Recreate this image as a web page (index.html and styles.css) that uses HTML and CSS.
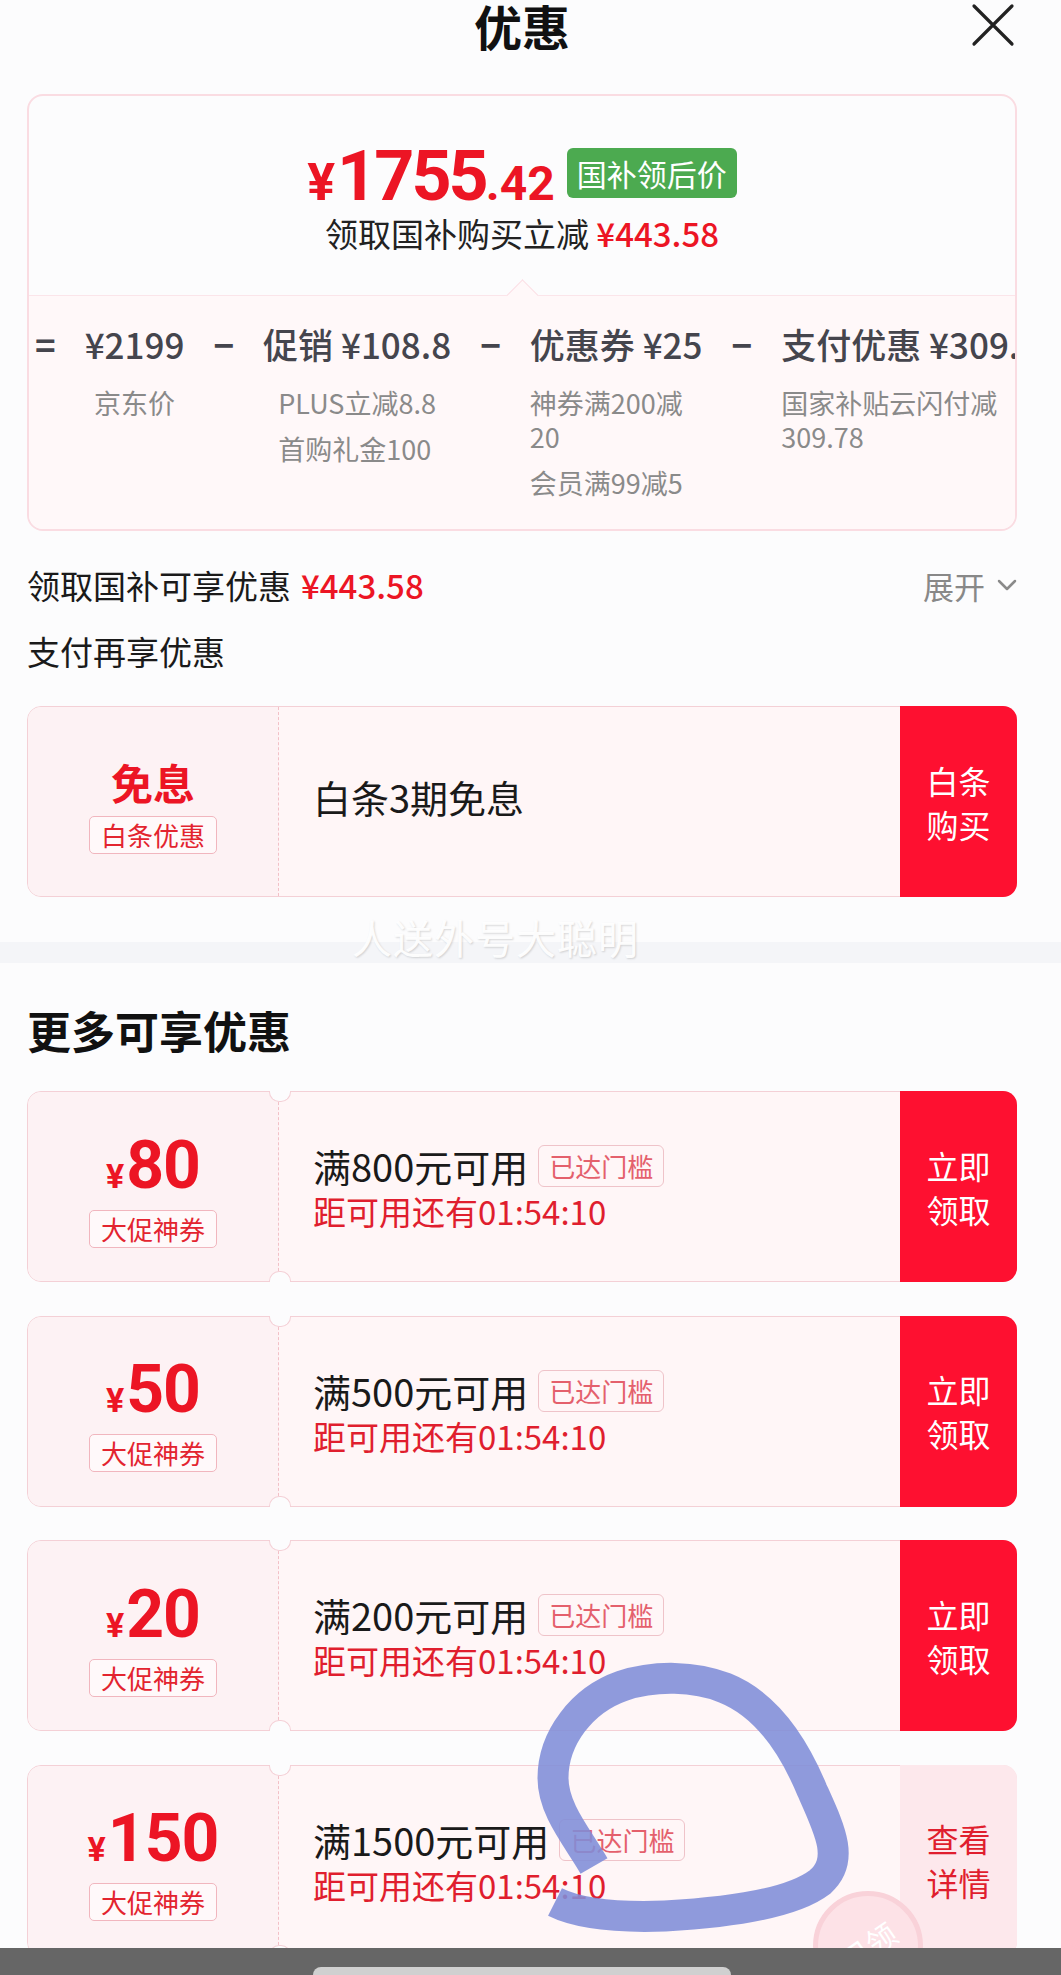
FILE: index.html
```html
<!DOCTYPE html>
<html lang="zh-CN">
<head>
<meta charset="utf-8">
<title>优惠</title>
<link rel="stylesheet" href="styles.css">
</head>
<body>
<div class="page">
  <header class="header">
    <h1 class="title">优惠</h1>
    <span class="close"><svg viewBox="0 0 44 44" width="44" height="44"><path d="M3 3L41 41M41 3L3 41" stroke="#222" stroke-width="3.2" stroke-linecap="round"/></svg></span>
  </header>

  <section class="summary">
    <div class="summary-top">
      <div class="price-row">
        <span class="price"><span class="yen">¥</span><span class="int">1755</span><span class="dec">.42</span></span>
        <span class="badge-green">国补领后价</span>
      </div>
      <p class="save">领取国补购买立减 <span class="red">¥443.58</span></p>
    </div>
    <div class="breakdown">
      <span class="op">=</span>
      <div class="col">
        <div class="col-head">¥2199</div>
        <div class="col-sub"><p>京东价</p></div>
      </div>
      <span class="op">−</span>
      <div class="col">
        <div class="col-head">促销 ¥108.8</div>
        <div class="col-sub"><p>PLUS立减8.8</p><p>首购礼金100</p></div>
      </div>
      <span class="op">−</span>
      <div class="col">
        <div class="col-head">优惠券 ¥25</div>
        <div class="col-sub wide"><p>神券满200减<br>20</p><p>会员满99减5</p></div>
      </div>
      <span class="op">−</span>
      <div class="col">
        <div class="col-head">支付优惠 ¥309.78</div>
        <div class="col-sub wide"><p>国家补贴云闪付减<br>309.78</p></div>
      </div>
    </div>
  </section>

  <div class="row-total">
    <span class="label">领取国补可享优惠<span class="red">¥443.58</span></span>
    <span class="expand">展开<svg width="20" height="12" viewBox="0 0 20 12"><path d="M2 2l8 8 8-8" fill="none" stroke="#8a8a8a" stroke-width="2.5" stroke-linecap="round" stroke-linejoin="round"/></svg></span>
  </div>
  <div class="pay-title">支付再享优惠</div>

  <div class="coupon baitiao">
    <div class="c-left">
      <div class="free">免息</div>
      <span class="tag">白条优惠</span>
    </div>
    <div class="c-mid">
      <div class="bt-text">白条3期免息</div>
    </div>
    <div class="c-btn">白条<br>购买</div>
  </div>
</div>

<div class="band"><span class="watermark">人送外号大聪明</span></div>

<div class="page">
  <h2 class="more-title">更多可享优惠</h2>

  <div class="coupon ticket">
    <div class="c-left">
      <div class="amount"><span class="yen">¥</span>80</div>
      <span class="tag">大促神券</span>
    </div>
    <div class="c-mid">
      <div class="cond">满800元可用<span class="tag2">已达门槛</span></div>
      <div class="timer">距可用还有01:54:10</div>
    </div>
    <div class="c-btn">立即<br>领取</div>
  </div>

  <div class="coupon ticket">
    <div class="c-left">
      <div class="amount"><span class="yen">¥</span>50</div>
      <span class="tag">大促神券</span>
    </div>
    <div class="c-mid">
      <div class="cond">满500元可用<span class="tag2">已达门槛</span></div>
      <div class="timer">距可用还有01:54:10</div>
    </div>
    <div class="c-btn">立即<br>领取</div>
  </div>

  <div class="coupon ticket">
    <div class="c-left">
      <div class="amount"><span class="yen">¥</span>20</div>
      <span class="tag">大促神券</span>
    </div>
    <div class="c-mid">
      <div class="cond">满200元可用<span class="tag2">已达门槛</span></div>
      <div class="timer">距可用还有01:54:10</div>
    </div>
    <div class="c-btn">立即<br>领取</div>
  </div>

  <div class="coupon ticket">
    <div class="c-left">
      <div class="amount"><span class="yen">¥</span>150</div>
      <span class="tag">大促神券</span>
    </div>
    <div class="c-mid">
      <div class="cond">满1500元可用<span class="tag2">已达门槛</span></div>
      <div class="timer">距可用还有01:54:10</div>
    </div>
    <div class="c-btn light">查看<br>详情</div>
    <div class="stamp"><span>已领</span></div>
  </div>
</div>

<svg class="scribble" viewBox="0 0 1061 1975" width="1061" height="1975">
  <path d="M594 1866 C578 1838 553 1810 553 1778 C553 1738 582 1700 622 1686 C655 1675 695 1676 725 1688 C765 1704 792 1742 812 1790 C830 1830 845 1860 820 1882 C790 1905 720 1913 665 1916 C610 1918 575 1912 555 1902" fill="none" stroke="#7f8dd8" stroke-width="31" stroke-linecap="butt" stroke-linejoin="round" opacity="0.88"/>
</svg>

<div class="navbar"><span class="pill"></span></div>
</body>
</html>
```

FILE: styles.css
```css
* { box-sizing: border-box; margin: 0; padding: 0; }

body {
  position: relative;
  width: 1061px;
  height: 1975px;
  overflow: hidden;
  background: #fcfcfd;
  font-family: "Noto Sans CJK SC", "Noto Sans", sans-serif;
  color: #1a1a1a;
}

.page {
  width: 990px;
  margin-left: 27px;
}

.header {
  position: relative;
  height: 94px;
  display: flex;
  justify-content: center;
}

.title {
  font-size: 48px;
  line-height: 50px;
  font-weight: 700;
  color: #111;
}

.close {
  position: absolute;
  right: 2px;
  top: 3px;
  width: 44px;
  height: 44px;
}

/* summary card */
.summary {
  border: 2px solid #fadce2;
  border-radius: 16px;
  overflow: hidden;
  background: #fcfcfd;
}

.summary-top {
  height: 199px;
  padding-top: 45px;
  display: flex;
  flex-direction: column;
  align-items: center;
}

.price-row {
  display: flex;
  align-items: center;
  gap: 12px;
}

.price {
  font-family: Roboto, "Liberation Sans", sans-serif;
  font-weight: 700;
  font-size: 70px;
  line-height: 70px;
  color: #ec1524;
}

.price .yen { font-size: 52px; margin-right: 2px; }
.price .int { letter-spacing: -3px; }
.price .dec { font-size: 48px; }

.badge-green {
  height: 50px;
  padding: 0 10px;
  border-radius: 6px;
  background: #4caa50;
  color: #fff;
  font-size: 30px;
  line-height: 50px;
  margin-bottom: 14px;
}

.save {
  margin-top: -6px;
  font-size: 33px;
  line-height: 40px;
  color: #222;
}

.save .red { color: #ec1524; font-weight: 500; }

.breakdown {
  position: relative;
  height: 234px;
  display: flex;
  align-items: flex-start;
  gap: 29px;
  padding: 26px 0 0 6px;
  background: #fff8f9;
  border-top: 1px solid #fbe5ea;
  white-space: nowrap;
}

.breakdown::before {
  content: "";
  position: absolute;
  left: 50%;
  top: -12px;
  margin-left: -11px;
  width: 22px;
  height: 22px;
  background: #fff8f9;
  border-top: 1px solid #fbdfe5;
  border-left: 1px solid #fbdfe5;
  transform: rotate(45deg);
}

.op {
  flex-shrink: 0;
  font-size: 35px;
  line-height: 44px;
  font-weight: 700;
  color: #45454d;
}

.col {
  flex-shrink: 0;
  display: flex;
  flex-direction: column;
  align-items: center;
}

.col-head {
  font-size: 35px;
  line-height: 44px;
  font-weight: 500;
  color: #45454d;
}

.col-sub {
  margin-top: 20px;
  max-width: 100%;
  text-align: left;
  font-size: 27px;
  line-height: 34px;
  color: #8a8a8a;
}

.col-sub p + p { margin-top: 12px; }
.col-sub.wide { align-self: stretch; }

/* totals */
.row-total {
  margin-top: 32px;
  height: 44px;
  display: flex;
  justify-content: space-between;
  align-items: center;
}

.row-total .label {
  font-size: 33px;
  line-height: 44px;
  color: #1a1a1a;
}

.row-total .red {
  margin-left: 10px;
  color: #ec1524;
  font-weight: 500;
}

.expand {
  display: flex;
  align-items: center;
  gap: 12px;
  font-size: 31px;
  color: #888;
}

.pay-title {
  margin-top: 22px;
  font-size: 33px;
  line-height: 44px;
}

/* coupons */
.coupon {
  position: relative;
  height: 191px;
  display: flex;
  border: 1px solid #f4d0d6;
  border-radius: 14px;
  background: #fff6f7;
}

.baitiao { margin-top: 33px; }

.ticket + .ticket { margin-top: 33.5px; }

.ticket::before,
.ticket::after {
  content: "";
  position: absolute;
  left: 241px;
  width: 20px;
  height: 10px;
  background: #fcfcfd;
  border: 1px solid #f4d0d6;
}

.ticket::before {
  top: -1px;
  border-top: 0;
  border-radius: 0 0 10px 10px;
}

.ticket::after {
  bottom: -1px;
  border-bottom: 0;
  border-radius: 10px 10px 0 0;
}

.c-left {
  width: 251px;
  flex-shrink: 0;
  display: flex;
  flex-direction: column;
  align-items: center;
  justify-content: center;
  padding-top: 8px;
  background: #fdf2f4;
  border-right: 1px dashed #f2c0c7;
  border-radius: 13px 0 0 13px;
}

.free {
  font-size: 42px;
  line-height: 48px;
  font-weight: 700;
  color: #ec1524;
}

.amount {
  display: flex;
  align-items: baseline;
  font-family: Roboto, "Liberation Sans", sans-serif;
  font-weight: 700;
  font-size: 66px;
  line-height: 64px;
  letter-spacing: -1px;
  color: #ec1524;
}

.amount .yen { font-size: 34px; margin-right: 3px; }

.tag {
  margin-top: 2px;
  padding: 0 11px;
  border: 1px solid #f1b6be;
  border-radius: 5px;
  background: #fff9fa;
  color: #e3242f;
  font-size: 26px;
  line-height: 36px;
}

.baitiao .tag { margin-top: 10px; }

.c-mid {
  flex: 1;
  padding-left: 34px;
  display: flex;
  flex-direction: column;
  justify-content: center;
}

.baitiao .c-mid { padding-bottom: 10px; }

.bt-text {
  font-size: 38px;
  line-height: 48px;
  color: #1a1a1a;
}

.cond {
  display: flex;
  align-items: center;
  font-size: 38px;
  line-height: 48px;
  color: #1a1a1a;
}

.tag2 {
  margin-left: 10px;
  padding: 0 10px;
  border: 1px solid #efc3c9;
  border-radius: 6px;
  color: #e4606c;
  font-size: 26px;
  line-height: 40px;
}

.timer {
  margin-top: 1px;
  font-size: 33px;
  line-height: 40px;
  color: #e01e2e;
}

.c-btn {
  width: 117px;
  flex-shrink: 0;
  margin: -1px -1px -1px 0;
  display: flex;
  align-items: center;
  justify-content: center;
  text-align: center;
  background: #fe1030;
  color: #fff;
  border-radius: 0 14px 14px 0;
  font-size: 32px;
  line-height: 44px;
}

.c-btn.light {
  background: #fde8ec;
  color: #e01e2e;
}

.stamp {
  position: absolute;
  left: 785px;
  top: 125px;
  width: 110px;
  height: 110px;
  border-radius: 50%;
  border: 5px solid #f9d2d9;
  background: #fde2e7;
  display: flex;
  align-items: center;
  justify-content: center;
}

.stamp span {
  transform: rotate(-35deg);
  color: #fff;
  font-size: 30px;
}

/* divider band */
.band {
  position: relative;
  margin-top: 45px;
  height: 21px;
  background: #f4f5f8;
}

.watermark {
  position: absolute;
  left: 352px;
  top: -25px;
  font-size: 40px;
  line-height: 40px;
  color: rgba(255, 255, 255, 0.95);
  text-shadow: 1px 1px 2px rgba(0, 0, 0, 0.15);
  letter-spacing: 1px;
}

.more-title {
  margin-top: 39px;
  font-size: 44px;
  line-height: 56px;
  font-weight: 700;
  color: #111;
}

.more-title + .ticket { margin-top: 33px; }

.scribble {
  position: absolute;
  left: 0;
  top: 0;
  pointer-events: none;
}

.navbar {
  position: absolute;
  left: 0;
  bottom: 0;
  width: 1061px;
  height: 27px;
  background: #666;
}

.pill {
  position: absolute;
  left: 313px;
  top: 19px;
  width: 418px;
  height: 16px;
  border-radius: 8px;
  background: #d0d0d0;
}
```
